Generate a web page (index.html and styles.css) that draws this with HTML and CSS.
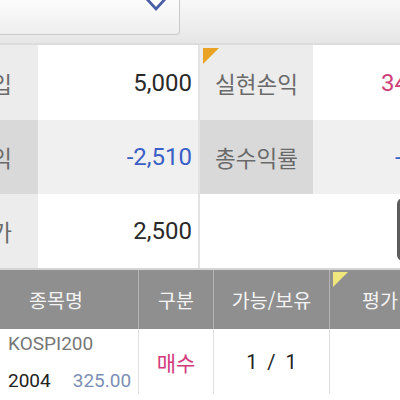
FILE: index.html
```html
<!DOCTYPE html>
<html lang="ko">
<head>
<meta charset="utf-8">
<title>잔고</title>
<link rel="stylesheet" href="styles.css">
</head>
<body>
<div class="page">
  <div class="top">
    <div class="combo">
      <svg class="chev" width="24" height="14" viewBox="0 0 24 14"><polyline points="2,-2 12,9 22,-2" fill="none" stroke="#4a5ea6" stroke-width="2.8" stroke-linejoin="miter"/></svg>
    </div>
  </div>
  <div class="summary">
    <div class="lab r1">입</div>
    <div class="val r1">5,000</div>
    <div class="sep"></div>
    <div class="lab r1 mark">실현손익</div>
    <div class="val r1 left pink">34</div>

    <div class="lab r2">익</div>
    <div class="val r2 blue">-2,510</div>
    <div class="sep"></div>
    <div class="lab r2 c">총수익률</div>
    <div class="val r2 left blue">-</div>

    <div class="lab r3">가</div>
    <div class="val r3">2,500</div>
    <div class="sep"></div>
    <div class="val r3 span2"><div class="btn"></div></div>
  </div>
  <div class="thead">
    <div class="th first">종목명</div>
    <div class="th">구분</div>
    <div class="th">가능/보유</div>
    <div class="th last flag">평가</div>
  </div>
  <div class="trow">
    <div class="td name">
      <div class="code">KOSPI200</div>
      <div class="sub"><span class="num">2004</span><span class="price">325.00</span></div>
    </div>
    <div class="td buy">매수</div>
    <div class="td qty">1  /  1</div>
    <div class="td"></div>
  </div>
</div>
</body>
</html>
```
FILE: styles.css
```css
html, body {
  margin: 0;
  padding: 0;
  background: #ffffff;
  overflow: hidden;
}
.page {
  width: 400px;
  height: 400px;
  overflow: hidden;
  font-family: Roboto, "Noto Sans CJK KR", sans-serif;
}
.top {
  height: 43px;
  background: linear-gradient(#f8f8f8, #e6e6e6);
  border-bottom: 2px solid #dcdcdc;
}
.combo {
  width: 179px;
  height: 34px;
  background: linear-gradient(#fcfcfc, #eeeeee);
  border-right: 1px solid #c9c9c9;
  border-bottom: 1px solid #c9c9c9;
  border-bottom-right-radius: 4px;
  display: flex;
  justify-content: flex-end;
  align-items: flex-start;
}
.chev {
  margin-right: 11px;
  display: block;
}
.summary {
  display: grid;
  grid-template-columns: 38px 160px 2px 113px 87px;
  grid-template-rows: 75px 74px 74px;
}
.lab {
  display: flex;
  align-items: center;
  justify-content: flex-end;
  padding-right: 26px;
  font-family: "Noto Sans CJK KR", sans-serif;
  font-size: 22.5px;
  color: #6a6a6a;
  background: #ececec;
  white-space: nowrap;
}
.lab.mark, .lab.c {
  justify-content: center;
  padding-right: 0;
  position: relative;
}
.lab.mark::before {
  content: "";
  position: absolute;
  left: 3px;
  top: 3px;
  border-top: 16px solid #e9a224;
  border-right: 16px solid transparent;
}
.lab.r2 { background: #d9d9d9; }
.val {
  display: flex;
  align-items: center;
  justify-content: flex-end;
  padding-right: 6px;
  font-size: 24px;
  color: #2a2a2a;
  background: #ffffff;
  white-space: nowrap;
}
.val.r2 { background: #f0f0f0; }
.val.left {
  justify-content: flex-start;
  padding-left: 68px;
  padding-right: 0;
}
.val.r2.left { padding-left: 82px; }
.pink { color: #cf3f7c; }
.blue { color: #3a5fc6; }
.sep { background: #e3e3e3; }
.span2 {
  grid-column: span 2;
  padding-right: 0;
}
.btn {
  width: 40px;
  height: 63px;
  margin-right: -37px;
  margin-top: -4px;
  border-radius: 6px;
  background: linear-gradient(90deg, #5a5a5a, #8a8a8a);
}
.thead, .trow {
  display: grid;
  grid-template-columns: 138px 75px 116px 1fr;
}
.thead {
  height: 59px;
  background: #8f8f8f;
  border-top: 2px solid #d4d4d4;
}
.th {
  display: flex;
  align-items: center;
  justify-content: center;
  font-family: "Noto Sans CJK KR", sans-serif;
  font-size: 19.5px;
  color: #f4f4f4;
  border-left: 1px solid #b4b4b4;
  position: relative;
  white-space: nowrap;
}
.th.first {
  border-left: none;
  padding-right: 26px;
}
.th.last {
  justify-content: flex-start;
  padding-left: 32px;
}
.th.flag::before {
  content: "";
  position: absolute;
  left: 3px;
  top: 2px;
  border-top: 15px solid #f0e67e;
  border-right: 15px solid transparent;
}
.trow {
  height: 62px;
}
.td {
  display: flex;
  align-items: center;
  justify-content: center;
  border-left: 1px solid #dedede;
  white-space: pre;
}
.td.name {
  border-left: none;
  flex-direction: column;
  align-items: flex-start;
  justify-content: flex-start;
  padding-left: 8px;
  padding-top: 2px;
  font-size: 19px;
}
.code {
  color: #777777;
  line-height: 26px;
}
.sub {
  line-height: 26px;
  margin-top: 11px;
  display: flex;
  gap: 22px;
}
.num { color: #222222; }
.price { color: #7b8fb5; }
.buy {
  font-family: "Noto Sans CJK KR", sans-serif;
  font-size: 21px;
  color: #d23a7c;
}
.qty {
  font-size: 20px;
  color: #222222;
}
```
